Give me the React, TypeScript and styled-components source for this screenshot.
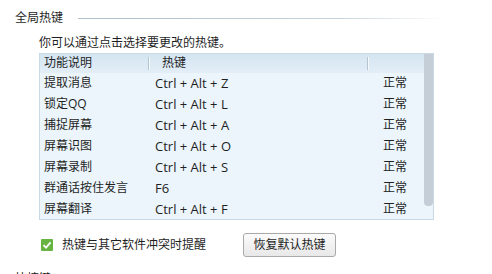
import styled, { createGlobalStyle } from "styled-components";

const GlobalStyle = createGlobalStyle`
  html, body {
    margin: 0;
    padding: 0;
    background: #ffffff;
  }
  body {
    font-family: "Open Sans", "Noto Sans CJK SC", sans-serif;
    font-size: 12px;
    color: #1f1f1f;
    overflow: hidden;
  }
`;

const Page = styled.div`
  width: 492px;
  height: 274px;
  overflow: hidden;
  display: flex;
  flex-direction: column;
`;

const SectionHead = styled.div<{ $top: number }>`
  display: flex;
  align-items: center;
  height: 16px;
  margin-top: ${(p) => p.$top}px;
  padding-left: 15px;
  line-height: 16px;
`;

const SectionLine = styled.div`
  flex: 1;
  height: 1px;
  margin-left: 15px;
  margin-right: 45px;
  background: linear-gradient(to right, #aebfca 0%, #c6d3db 70%, rgba(255, 255, 255, 0) 100%);
`;

const Body = styled.div`
  display: flex;
  flex-direction: column;
  padding-left: 39px;
`;

const Hint = styled.div`
  height: 16px;
  line-height: 16px;
  margin-top: 9px;
`;

const Table = styled.div`
  display: flex;
  width: 393px;
  height: 165px;
  margin-top: 2px;
  border: 1px solid #c8d8e4;
  background: #ebf5fb;
`;

const List = styled.div`
  flex: 1;
  display: flex;
  flex-direction: column;
`;

const Row = styled.div<{ $head?: boolean }>`
  display: grid;
  grid-template-columns: 108px 219px 1fr;
  align-items: center;
  height: ${(p) => (p.$head ? 19 : 21)}px;
  line-height: 16px;
  background: ${(p) => (p.$head ? "linear-gradient(#d4e5f1, #e3eef7)" : "transparent")};
`;

const HeadCell = styled.div<{ $pad: number; $divider?: boolean }>`
  position: relative;
  height: 100%;
  display: flex;
  align-items: center;
  padding-left: ${(p) => p.$pad}px;

  &::before {
    content: "";
    display: ${(p) => (p.$divider ? "block" : "none")};
    position: absolute;
    left: 0;
    top: 3px;
    bottom: 3px;
    width: 1px;
    background: #b4c4d0;
    box-shadow: 1px 0 0 #f4f9fc;
  }
`;

const Cell = styled.div<{ $pad: number; $latin?: boolean }>`
  padding-left: ${(p) => p.$pad}px;
  font-size: ${(p) => (p.$latin ? 13 : 12)}px;
  white-space: nowrap;
`;

const ScrollTrack = styled.div`
  width: 9px;
  display: flex;
  flex-direction: column;
`;

const Thumb = styled.div`
  height: 152px;
  background: #c5ced6;
  border-radius: 0 0 4px 4px;
`;

const Footer = styled.div`
  display: flex;
  align-items: center;
  height: 24px;
  margin-top: 13px;
`;

const Check = styled.label`
  display: flex;
  align-items: center;
  gap: 9px;
  margin-left: 2px;
  width: 202px;
  line-height: 16px;
`;

const Box = styled.span`
  width: 12px;
  height: 12px;
  display: flex;
  align-items: center;
  justify-content: center;
  background: #67b443;
  border-radius: 1px;
`;

const Button = styled.button`
  width: 93px;
  height: 24px;
  padding: 0;
  font: inherit;
  color: #1f1f1f;
  border: 1px solid #a9a9a9;
  border-radius: 3px;
  background: linear-gradient(#fbfbfb, #e8e8e8);
  line-height: 16px;
`;

const rows = [
  ["提取消息", "Ctrl + Alt + Z"],
  ["锁定QQ", "Ctrl + Alt + L"],
  ["捕捉屏幕", "Ctrl + Alt + A"],
  ["屏幕识图", "Ctrl + Alt + O"],
  ["屏幕录制", "Ctrl + Alt + S"],
  ["群通话按住发言", "F6"],
  ["屏幕翻译", "Ctrl + Alt + F"],
];

export default function App() {
  return (
    <>
      <GlobalStyle />
      <Page>
        <SectionHead $top={10}>
          全局热键
          <SectionLine />
        </SectionHead>
        <Body>
          <Hint>你可以通过点击选择要更改的热键。</Hint>
          <Table>
            <List>
              <Row $head>
                <HeadCell $pad={4}>功能说明</HeadCell>
                <HeadCell $pad={14} $divider>
                  热键
                </HeadCell>
                <HeadCell $pad={16} $divider />
              </Row>
              {rows.map(([name, key]) => (
                <Row key={name}>
                  <Cell $pad={4}>{name}</Cell>
                  <Cell $pad={7} $latin>
                    {key}
                  </Cell>
                  <Cell $pad={16}>正常</Cell>
                </Row>
              ))}
            </List>
            <ScrollTrack>
              <Thumb />
            </ScrollTrack>
          </Table>
          <Footer>
            <Check>
              <Box>
                <svg width="10" height="10" viewBox="0 0 10 10">
                  <path d="M1.5 5.2 L4 7.6 L8.6 2.4" fill="none" stroke="#fff" strokeWidth="1.8" />
                </svg>
              </Box>
              热键与其它软件冲突时提醒
            </Check>
            <Button>恢复默认热键</Button>
          </Footer>
        </Body>
        <SectionHead $top={14}>快捷键</SectionHead>
      </Page>
    </>
  );
}
